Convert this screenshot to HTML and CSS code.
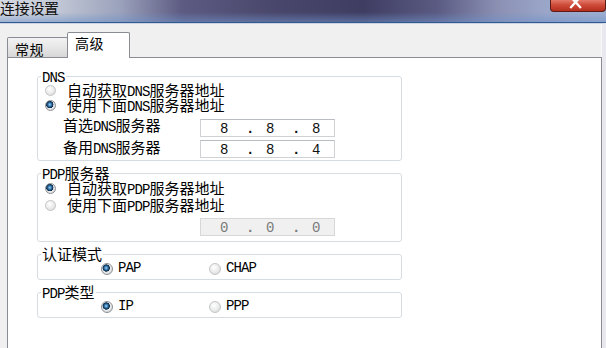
FILE: index.html
```html
<!DOCTYPE html>
<html lang="zh-CN">
<head>
<meta charset="utf-8">
<title>连接设置</title>
<link rel="stylesheet" href="styles.css">
</head>
<body>
<div class="window">
  <div class="titlebar">
    <span class="title">连接设置</span>
    <span class="close">
      <svg width="56" height="12" viewBox="0 0 56 12" aria-hidden="true">
        <path d="M20 -4 L31 8 M31 -4 L20 8" stroke="#ffffff" stroke-width="2.4" fill="none"/>
      </svg>
    </span>
  </div>
  <div class="client">
    <div class="tabs">
      <div class="tab">常规</div>
      <div class="tab active">高级</div>
    </div>
    <div class="panel">
      <fieldset class="group dns">
        <legend><span class="en">DNS</span></legend>
        <div class="opt first"><span class="radio"></span><span class="lbl">自动获取<span class="en">DNS</span>服务器地址</span></div>
        <div class="opt"><span class="radio on"></span><span class="lbl">使用下面<span class="en">DNS</span>服务器地址</span></div>
        <div class="iprow r1"><span class="iplabel">首选<span class="en">DNS</span>服务器</span><span class="ip"><span class="d">8</span><span class="dot">.</span><span class="d">8</span><span class="dot">.</span><span class="d">8</span></span></div>
        <div class="iprow r2"><span class="iplabel">备用<span class="en">DNS</span>服务器</span><span class="ip"><span class="d">8</span><span class="dot">.</span><span class="d">8</span><span class="dot">.</span><span class="d">4</span></span></div>
      </fieldset>
      <fieldset class="group pdp">
        <legend><span class="en">PDP</span>服务器</legend>
        <div class="opt first"><span class="radio on"></span><span class="lbl">自动获取<span class="en">PDP</span>服务器地址</span></div>
        <div class="opt second"><span class="radio"></span><span class="lbl">使用下面<span class="en">PDP</span>服务器地址</span></div>
        <div class="iprow r3"><span class="iplabel"></span><span class="ip disabled"><span class="d">0</span><span class="dot">.</span><span class="d">0</span><span class="dot">.</span><span class="d">0</span></span></div>
      </fieldset>
      <fieldset class="group small">
        <legend>认证模式</legend>
        <div class="choices">
          <div class="choice"><span class="radio on"></span><span class="lbl en">PAP</span></div>
          <div class="choice"><span class="radio"></span><span class="lbl en">CHAP</span></div>
        </div>
      </fieldset>
      <fieldset class="group small">
        <legend><span class="en">PDP</span>类型</legend>
        <div class="choices">
          <div class="choice"><span class="radio on"></span><span class="lbl en">IP</span></div>
          <div class="choice"><span class="radio"></span><span class="lbl en">PPP</span></div>
        </div>
      </fieldset>
    </div>
  </div>
</div>
</body>
</html>
```

FILE: styles.css
```css
html, body {
  margin: 0;
  padding: 0;
}
body {
  width: 606px;
  height: 348px;
  overflow: hidden;
  background: #f0f0f0;
  font-family: "Noto Sans CJK SC", "Liberation Sans", sans-serif;
  color: #000;
}
.window {
  display: flex;
  flex-direction: column;
  height: 348px;
}
.titlebar {
  height: 22px;
  flex: none;
  display: flex;
  justify-content: space-between;
  align-items: flex-start;
  border-bottom: 1px solid #36598c;
  background:
    linear-gradient(180deg, rgba(120,150,200,0) 0%, rgba(110,140,195,0) 55%, rgba(110,145,200,0.55) 100%),
    linear-gradient(90deg, #d6dae2 0%, #c3c9d6 9%, #9aa1bb 20%, #5d5b82 30%, #4a476c 45%, #3f3d62 60%, #5a5a82 72%, #8b90b3 82%, #9aa6c8 90%, #9fb0d2 100%);
}
.title {
  font-size: 15px;
  line-height: 16px;
  color: #111;
  letter-spacing: -0.3px;
}
.close {
  width: 56px;
  height: 12px;
  box-sizing: border-box;
  border: 1px solid #5c1b15;
  border-top: none;
  border-radius: 0 0 4px 4px;
  background: linear-gradient(180deg, #e2796a 0%, #cf4b39 45%, #b52e1e 100%);
  display: flex;
  overflow: hidden;
}
.client {
  flex: 1;
  display: flex;
  flex-direction: column;
  padding: 8px 0 0 7px;
  border-top: 1px solid #c9d5e6;
  border-right: 4px solid #e8e8ee;
  box-shadow: inset -1px 0 0 #f8f8f8;
  min-height: 0;
}
.tabs {
  display: flex;
  align-items: flex-end;
  height: 25px;
  flex: none;
  position: relative;
  z-index: 1;
}
.tab {
  box-sizing: border-box;
  width: 61px;
  height: 20px;
  border: 1px solid #898c95;
  border-bottom: none;
  border-radius: 2px 2px 0 0;
  background: linear-gradient(180deg, #f3f3f3 0%, #e6e6e6 50%, #d7d7d7 100%);
  font-size: 14px;
  line-height: 16px;
  padding: 3px 0 0 7px;
  letter-spacing: 0.5px;
}
.tab.active {
  width: 63px;
  height: 26px;
  margin-left: -1px;
  margin-bottom: -1px;
  background: #fff;
  padding: 2px 0 0 7px;
}
.panel {
  flex: 1;
  background: #fff;
  border: 1px solid #898c95;
  border-bottom: none;
  padding: 10px 0 0 29px;
  display: flex;
  flex-direction: column;
  align-items: flex-start;
  font-size: 15px;
}
.en {
  font-family: "Liberation Mono", monospace;
  font-size: 14px;
  letter-spacing: -0.9px;
}
.group {
  box-sizing: border-box;
  width: 365px;
  margin: 0;
  padding: 0 0 2px 0;
  border: 1px solid #d5dde3;
  border-radius: 3px;
  min-inline-size: 0;
}
.group + .group {
  margin-top: 4px;
}
.group legend {
  padding: 0 1px;
  margin-left: 3px;
  height: 16px;
  line-height: 16px;
  font-size: 15px;
  white-space: nowrap;
}
.lbl {
  line-height: 15px;
  white-space: nowrap;
}
.opt {
  display: flex;
  align-items: center;
  height: 15px;
  padding-left: 7px;
}
.opt.first {
  margin-top: -1px;
}
.pdp .opt.first {
  margin-top: 0;
}
.pdp .opt.second {
  margin-top: 2px;
}
.opt .radio {
  margin-right: 11px;
}
.radio {
  flex: none;
  display: inline-block;
  box-sizing: border-box;
  width: 11px;
  height: 11px;
  border-radius: 50%;
  border: 1px solid #c2c4c6;
  background: radial-gradient(circle at 40% 35%, #ffffff 0%, #eeeeee 45%, #d2d3d4 100%);
}
.radio.on {
  border-color: #8c9194;
  background:
    radial-gradient(circle at 42% 40%, #9fd6f6 0px, #4a90c4 1.3px, #1c4e7c 2.5px, #0e2a45 3.4px, rgba(14,42,69,0) 3.9px),
    radial-gradient(circle at 40% 35%, #ffffff 0%, #e4e6e8 60%, #c6c9cc 100%);
}
.iprow {
  display: flex;
  align-items: center;
  height: 18px;
  white-space: nowrap;
}
.iprow.r1 { margin-top: 6px; }
.iprow.r2 { margin-top: 3px; }
.iprow.r3 { margin-top: 5px; }
.pdp { padding-bottom: 5px; }
.iplabel {
  width: 137px;
  padding-left: 25px;
  line-height: 15px;
  margin-top: -4px;
}
.r2 .iplabel { margin-top: -3px; }
.ip {
  box-sizing: border-box;
  width: 135px;
  height: 18px;
  border: 1px solid #cfd1d4;
  border-top-color: #b9bcc0;
  background: #fff;
  display: flex;
  align-items: center;
  padding-left: 19px;
  font-family: "Liberation Mono", monospace;
  font-size: 14px;
  line-height: 16px;
  color: #111;
}
.ip .d {
  width: 8px;
  text-align: center;
  margin-top: 1px;
}
.ip .dot {
  width: 8px;
  text-align: center;
  margin: 1px 12px 0 18px;
  font-weight: bold;
}
.ip.disabled {
  background: #f0f0f0;
  border-color: #d6d7d9;
  color: #7a7a7a;
}
.small {
  padding-bottom: 3px;
}
.choices {
  display: flex;
  height: 15px;
  align-items: center;
  padding-left: 63px;
  margin-top: -1px;
}
.choice {
  display: flex;
  align-items: center;
  width: 108px;
}
.choice .radio {
  width: 12px;
  height: 12px;
  margin-right: 5px;
}
```
